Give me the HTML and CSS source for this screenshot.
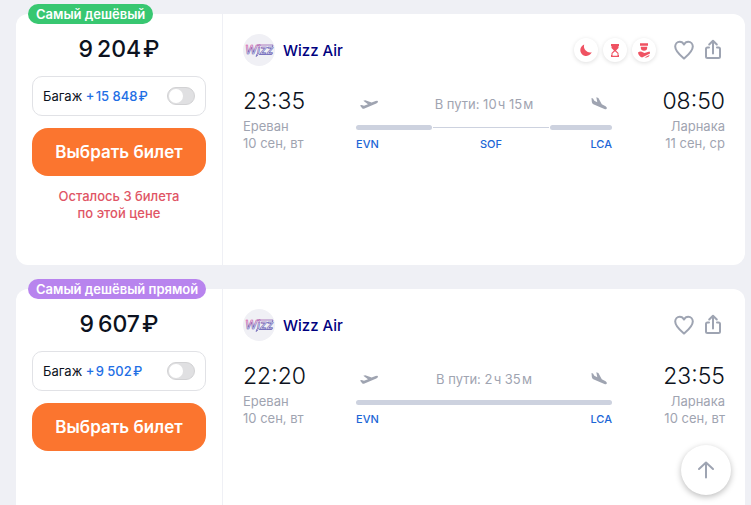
FILE: index.html
```html
<!DOCTYPE html>
<html lang="ru">
<head>
<meta charset="utf-8">
<meta name="viewport" content="width=device-width, initial-scale=1">
<title>Авиабилеты Ереван — Ларнака</title>
<link rel="stylesheet" href="styles.css">
</head>
<body>
<svg class="sprite" aria-hidden="true">
  <defs>
    <linearGradient id="wizz" gradientUnits="userSpaceOnUse" x1="0" y1="9" x2="4" y2="23">
      <stop offset="0.2" stop-color="#d0409a"/>
      <stop offset="0.8" stop-color="#5a4fae"/>
    </linearGradient>
  </defs>
  <symbol id="heart" viewBox="0 0 24 24"><path d="M12 20.600C9.500 18.400 3.200 13.600 3.200 8.600C3.200 5.700 5.200 3.700 7.700 3.700C9.600 3.700 11.100 4.700 12 6.500C12.900 4.700 14.400 3.700 16.300 3.700C18.800 3.700 20.800 5.700 20.800 8.600C20.800 13.600 14.500 18.400 12 20.600Z" fill="none" stroke="currentColor" stroke-width="2" stroke-linejoin="round"/></symbol>
  <symbol id="share" viewBox="0 0 24 24"><path d="M8 9.500H6.500Q5 9.500 5 11V18.500Q5 20 6.500 20H17.500Q19 20 19 18.500V11Q19 9.500 17.500 9.500H16M12 15.500V3M8.200 6.500L12 2.700L15.800 6.500" fill="none" stroke="currentColor" stroke-width="2" stroke-linecap="round" stroke-linejoin="round"/></symbol>
  <symbol id="takeoff" viewBox="0 0 20 14"><path d="M1 8.500L2.600 8L5 8.700L9 7.200L4.300 3.800L6.300 3.200L12.600 5.600L16.600 4.100Q18.700 3.400 19 4.400Q19.200 5.400 17.300 6.600L5.500 11.500Q4.200 12 3.400 11.400Z" fill="currentColor"/></symbol>
  <symbol id="landing" viewBox="0 0 18 16"><path d="M1.500 2L3 2.500L4.300 4.800L7.300 6.200L6.300 1.200L8.400 2L11.800 8.300L15.600 10.300Q17.300 11.500 16.800 12.600Q16.300 13.600 14.400 13L3.300 8.200Q1.900 7.500 1.800 5.800Z" fill="currentColor"/></symbol>
</svg>
<main class="tickets">
  <article class="ticket">
    <span class="label label-cheap">Самый дешёвый</span>
    <section class="offer">
      <p class="price">9&#8239;204&#8202;₽</p>
      <label class="baggage"><span>Багаж <b>+&#8202;15&nbsp;848&#8202;₽</b></span><input class="toggle" type="checkbox"></label>
      <button class="buy" type="button">Выбрать билет</button>
      <p class="left">Осталось 3 билета<br>по этой цене</p>
    </section>
    <section class="flight">
      <header class="carrier">
        <svg class="logo" viewBox="0 0 32 32" aria-hidden="true"><circle cx="16" cy="16" r="16"/><path d="M14 11H30L29 13.500H24M16 20.500H28.500L29 18.500M14 20L13 22.500L15 21"/><text x="2" y="20">Wizz</text></svg>
        <h2 class="name">Wizz Air</h2>
        <ul class="notes">
          <li><svg viewBox="0 0 24 24" aria-label="Ночная пересадка"><path d="M10.200 6.500A5.900 5.900 0 1 0 17.700 14.200A6.200 6.200 0 0 1 10.200 6.500Z"/></svg></li>
          <li><svg viewBox="0 0 24 24" aria-label="Длинная пересадка"><path d="M8 6H16V8H15.500V10L13 12.500L15.500 15V17H16V19H8V17H8.500V15L11 12.500L8.500 10V8H8Z"/><path class="hollow" d="M9.500 17.800V15.500L12 13.200L14.500 15.500V17.800Z"/></svg></li>
          <li><svg viewBox="0 0 24 24" aria-label="Нужна виза"><path d="M8 5.300H16V7.700H8ZM8.800 8.700H15.200V10Q15 12.800 12 12.800Q9 12.800 8.800 10ZM6 14.500Q7 13.500 9 13.500L12.500 15L17.500 13.500Q18.200 14.300 18 15.500L10 19.500Q6.500 18 6 14.500Z"/><path d="M12.500 19.500L17.800 16.800Q17 19.200 14.500 19.500Z"/></svg></li>
        </ul>
        <div class="actions">
          <button type="button" aria-label="В избранное"><svg><use href="#heart"/></svg></button>
          <button type="button" aria-label="Поделиться"><svg><use href="#share"/></svg></button>
        </div>
      </header>
      <div class="segment">
        <div class="point"><time class="time">23:35</time><p>Ереван<br>10 сен, вт</p></div>
        <div class="route">
          <div class="duration"><svg><use href="#takeoff"/></svg><span>В пути: 10&#8202;ч 15&#8202;м</span><svg><use href="#landing"/></svg></div>
          <div class="track track-stop"><i class="leg"></i><i class="stop"></i><i class="leg"></i></div>
          <div class="codes track-stop"><a href="#">EVN</a><a href="#">SOF</a><a href="#">LCA</a></div>
        </div>
        <div class="point point-end"><time class="time">08:50</time><p>Ларнака<br>11 сен, ср</p></div>
      </div>
    </section>
  </article>
  <article class="ticket">
    <span class="label label-direct">Самый дешёвый прямой</span>
    <section class="offer">
      <p class="price">9&#8239;607&#8202;₽</p>
      <label class="baggage"><span>Багаж <b>+&#8202;9&nbsp;502&#8202;₽</b></span><input class="toggle" type="checkbox"></label>
      <button class="buy" type="button">Выбрать билет</button>
    </section>
    <section class="flight">
      <header class="carrier">
        <svg class="logo" viewBox="0 0 32 32" aria-hidden="true"><circle cx="16" cy="16" r="16"/><path d="M14 11H30L29 13.500H24M16 20.500H28.500L29 18.500M14 20L13 22.500L15 21"/><text x="2" y="20">Wizz</text></svg>
        <h2 class="name">Wizz Air</h2>
        <div class="actions">
          <button type="button" aria-label="В избранное"><svg><use href="#heart"/></svg></button>
          <button type="button" aria-label="Поделиться"><svg><use href="#share"/></svg></button>
        </div>
      </header>
      <div class="segment">
        <div class="point"><time class="time">22:20</time><p>Ереван<br>10 сен, вт</p></div>
        <div class="route">
          <div class="duration"><svg><use href="#takeoff"/></svg><span>В пути: 2&#8202;ч 35&#8202;м</span><svg><use href="#landing"/></svg></div>
          <div class="track"><i class="leg"></i></div>
          <div class="codes track-direct"><a href="#">EVN</a><a href="#">LCA</a></div>
        </div>
        <div class="point point-end"><time class="time">23:55</time><p>Ларнака<br>10 сен, вт</p></div>
      </div>
    </section>
  </article>
</main>
<button class="to-top" type="button" aria-label="Наверх"><svg viewBox="0 0 24 24"><path d="M12 19.500V5M5 11L12 4.500L19 11"/></svg></button>
</body>
</html>
```
FILE: styles.css
```css
* { box-sizing: border-box; }

body {
  margin: 0;
  height: 100vh;
  overflow: hidden;
  background: #eff0f5;
  color: #0c1220;
  font: 13px/17px Inter, "Liberation Sans", sans-serif;
}

p, h2, ul { margin: 0; padding: 0; }
button { border: 0; padding: 0; font: inherit; color: inherit; background: none; cursor: pointer; }
a { color: #1c66d6; text-decoration: none; }
.sprite { position: absolute; width: 0; height: 0; }

.tickets {
  display: flex;
  flex-direction: column;
  gap: 24px;
  padding: 14px 6px 14px 16px;
}

.ticket {
  position: relative;
  flex: none;
  display: grid;
  grid-template-columns: 207px 1fr;
  min-height: 251px;
  background: #fff;
  border-radius: 12px;
}

.label {
  position: absolute;
  top: -10px;
  left: 12px;
  padding: 0 8px;
  border-radius: 10px;
  color: #fff;
  font-weight: 600;
  line-height: 20px;
}
.label-cheap { background: #38c771; }
.label-direct { background: #b884ee; }

.offer {
  display: flex;
  flex-direction: column;
  gap: 12px;
  padding: 20px 16px;
  border-right: 1px solid #eff0f5;
  text-align: center;
}
.price { font-size: 23px; line-height: 30px; font-weight: 500; }

.baggage {
  display: flex;
  align-items: center;
  justify-content: space-between;
  height: 40px;
  padding: 0 10px;
  border: 1px solid #e1e2e6;
  border-radius: 10px;
}
.baggage b { color: #1f6fe5; font-weight: 500; }

.toggle {
  appearance: none;
  width: 28px;
  height: 18px;
  margin: 0;
  padding: 1px;
  border: 1px solid #d2d2d4;
  border-radius: 9px;
  background: #e0e0e2;
}
.toggle::before {
  content: "";
  display: block;
  width: 14px;
  height: 14px;
  border-radius: 50%;
  background: #fff;
}

.buy {
  height: 48px;
  border-radius: 16px;
  background: #fb752f;
  color: #fff;
  font-size: 17px;
  font-weight: 600;
}
.left { color: #e05565; font-weight: 500; }

.flight { padding: 20px; }

.carrier { display: flex; align-items: center; height: 32px; }
.logo { width: 32px; height: 32px; margin-right: 8px; }
.logo circle { fill: #f0f0f5; }
.logo text {
  font: italic 500 12px Inter, sans-serif;
  fill: #fff;
  stroke: url(#wizz);
  stroke-width: 0.6px;
}
.logo path { fill: none; stroke: url(#wizz); stroke-width: 0.7px; }
.name { margin-right: auto; color: #00007f; font-size: 15px; font-weight: 500; }

.notes { display: flex; gap: 5px; margin-right: 16px; list-style: none; }
.notes li { height: 24px; border-radius: 50%; box-shadow: 0 1px 4px #0002; }
.notes svg { display: block; width: 24px; height: 24px; fill: #ef5262; }
.notes .hollow { fill: #fff; }

.actions { display: flex; gap: 5px; color: #9ea4b2; }
.actions svg { display: block; width: 24px; height: 24px; }

.segment {
  display: grid;
  grid-template-columns: 113px 1fr 113px;
  margin-top: 20px;
}
.point { color: #9fa4b1; }
.point-end { text-align: right; }
.time { display: block; margin-bottom: 2px; color: #0c1220; font-size: 23px; line-height: 30px; font-weight: 300; }

.duration {
  display: flex;
  align-items: center;
  justify-content: space-between;
  height: 36px;
  padding: 0 3px;
  color: #9fa4b1;
}
.duration svg { width: 20px; height: 16px; }
.track { display: grid; align-items: center; column-gap: 1px; height: 5px; margin-top: 3px; }
.track-stop { grid-template-columns: 76fr 116fr 62fr; }
.leg { height: 5px; border-radius: 3px; background: #cdd2df; }
.stop { height: 1px; background: #cdd2df; }
.codes { display: grid; column-gap: 1px; margin-top: 6px; font-size: 11px; font-weight: 500; text-align: center; }
.track-direct { grid-template-columns: 1fr 1fr; }
.codes a:first-child { text-align: left; }
.codes a:last-child { text-align: right; }

.to-top {
  position: fixed;
  right: 20px;
  bottom: 10px;
  display: grid;
  place-items: center;
  width: 50px;
  height: 50px;
  border-radius: 50%;
  background: #fff;
  box-shadow: 0 2px 6px #0004;
}
.to-top svg { width: 24px; fill: none; stroke: #9ea4b2; stroke-width: 2; stroke-linecap: round; stroke-linejoin: round; }
```
